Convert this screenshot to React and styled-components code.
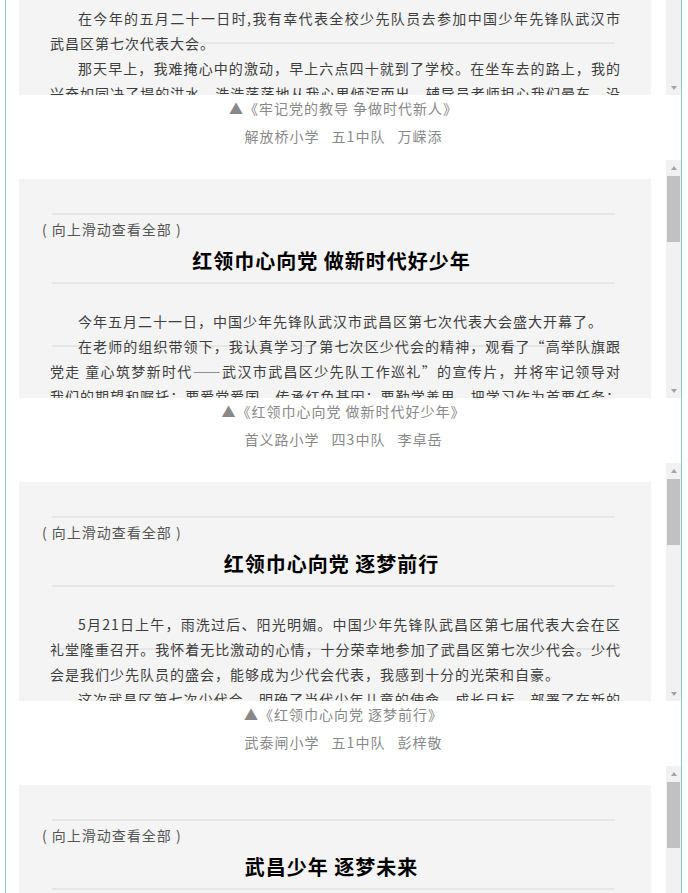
import React from "react";
import styled, { createGlobalStyle } from "styled-components";

const Global = createGlobalStyle`
  html, body { margin: 0; padding: 0; background: #ffffff; }
  body {
    font-family: "Noto Sans CJK SC", "Noto Sans", "Liberation Sans", sans-serif;
    overflow: hidden;
  }
`;

const Page = styled.div`
  box-sizing: border-box;
  width: 677px;
  margin-left: 5px;
  min-height: 1200px;
  border-left: 1px solid #86cfc2;
  border-right: 1px solid #86cfc2;
  background: #fff;
`;

const Feed = styled.div`
  display: flex;
  flex-direction: column;
  margin-top: -143px;
`;

const Section = styled.section`
  display: flex;
  flex-direction: column;
  padding-bottom: 11px;
`;

const Frame = styled.div`
  display: flex;
  height: 238px;
  background: #fff;
`;

const Viewport = styled.div`
  flex: 1;
  min-width: 0;
  box-sizing: border-box;
  overflow-y: auto;
  overflow-x: hidden;
  scrollbar-width: none;
  padding: 19px 15px 0 13px;
  &::-webkit-scrollbar { display: none; }
`;

const Scrollbar = styled.div`
  width: 15px;
  flex: none;
  display: flex;
  flex-direction: column;
  background: #f1f1f1;
`;

const ArrowButton = styled.div`
  height: 15px;
  flex: none;
  display: flex;
  align-items: center;
  justify-content: center;
  &::before {
    content: "";
    width: 0;
    height: 0;
    border-left: 3.5px solid transparent;
    border-right: 3.5px solid transparent;
    ${(p) =>
      p.$dir === "up"
        ? "border-bottom: 4px solid #a3a3a3;"
        : "border-top: 4px solid #a3a3a3;"}
  }
`;

const Track = styled.div`
  flex: 1;
  display: flex;
  flex-direction: column;
  padding: 1px 1px 0;
`;

const Thumb = styled.div`
  height: 66px;
  background: #c1c1c1;
`;

const line = (y) =>
  `linear-gradient(#e6e6e6, #e6e6e6) no-repeat 33px ${y}px / 563px 2px`;

const Panel = styled.div`
  box-sizing: border-box;
  min-height: 731px;
  padding: 40px 30px 30px 23px;
  background: ${line(34)}, ${line(103)}, ${line(166)}, #f4f4f4;
`;

const Hint = styled.div`
  font-size: 14px;
  line-height: 20px;
  letter-spacing: 1px;
  color: #555;
  white-space: pre;
`;

const Title = styled.h2`
  margin: 8px 0 0;
  font-size: 20px;
  line-height: 28px;
  font-weight: bold;
  letter-spacing: 1px;
  color: #000;
  text-align: center;
`;

const Body = styled.div`
  margin-top: 34px;
  padding-left: 8px;
`;

const Para = styled.p`
  margin: 0;
  font-size: 14px;
  line-height: 25px;
  letter-spacing: 1px;
  color: #3e3e3e;
  text-align: justify;
  text-indent: 2em;
`;

const Wide = styled.span`
  font-feature-settings: "fwid" 1;
  font-variant-east-asian: full-width;
`;

const Caption = styled.div`
  font-size: 14px;
  line-height: 26px;
  letter-spacing: 1px;
  color: #888;
  text-align: center;
`;

const Byline = styled.div`
  margin-top: 2px;
  display: flex;
  justify-content: center;
  gap: 12px;
  font-size: 14px;
  line-height: 26px;
  letter-spacing: 1px;
  color: #888;
  min-height: 26px;
`;

const articles = [
  {
    title: "牢记党的教导 争做时代新人",
    byline: ["解放桥小学", "五1中队", "万嵘添"],
    paras: [
      "在今年的五月二十一日时,我有幸代表全校少先队员去参加中国少年先锋队武汉市武昌区第七次代表大会。",
      "那天早上，我难掩心中的激动，早上六点四十就到了学校。在坐车去的路上，我的兴奋如同决了堤的洪水，浩浩荡荡地从我心里倾泻而出。辅导员老师担心我们晕车，没有让我们多说话，我便望着窗外，想象着会场的样子。",
      "到了会场，我看到了来自全区各个学校的少先队员代表，大家都戴着鲜艳的红领巾，脸上洋溢着灿烂的笑容。大会开始了，我们齐唱队歌，聆听了领导的讲话。",
      "这次少代会让我明白了，作为新时代的少先队员，我们要牢记党的教导，好好学习，天天向上，争做新时代的好少年。",
    ],
  },
  {
    title: "红领巾心向党 做新时代好少年",
    byline: ["首义路小学", "四3中队", "李卓岳"],
    paras: [
      "今年五月二十一日，中国少年先锋队武汉市武昌区第七次代表大会盛大开幕了。",
      "在老师的组织带领下，我认真学习了第七次区少代会的精神，观看了“高举队旗跟党走 童心筑梦新时代——武汉市武昌区少先队工作巡礼”的宣传片，并将牢记领导对我们的期望和嘱托：要爱党爱国，传承红色基因；要勤学善思，把学习作为首要任务；要锤炼品德，做一个有道德的人；要强健体魄，积极参加体育锻炼。",
      "作为一名少先队员，我要从现在做起，从点滴做起，红领巾心向党，做新时代的好少年。",
    ],
  },
  {
    title: "红领巾心向党 逐梦前行",
    byline: ["武泰闸小学", "五1中队", "彭梓敬"],
    paras: [
      "5月21日上午，雨洗过后、阳光明媚。中国少年先锋队武昌区第七届代表大会在区礼堂隆重召开。我怀着无比激动的心情，十分荣幸地参加了武昌区第七次少代会。少代会是我们少先队员的盛会，能够成为少代会代表，我感到十分的光荣和自豪。",
      "这次武昌区第七次少代会，明确了当代少年儿童的使命、成长目标，部署了在新的时代里少先队工作的任务。我们要听党话、跟党走，从小学先锋、长大做先锋。",
      "我一定会把这次大会的精神带回学校，和同学们一起分享，红领巾心向党，逐梦前行。",
    ],
  },
  {
    title: "武昌少年 逐梦未来",
    byline: [],
    paras: [
      "五月的江城，处处洋溢着青春的气息。中国少年先锋队武汉市武昌区第七次代表大会隆重召开，我作为少先队员代表参加了这次盛会。",
      "大会上，我们认真聆听了工作报告，深刻感受到了党和国家对少年儿童的关怀。我们要从小树立远大理想，努力学习，做一名合格的少先队员。",
    ],
  },
];

function renderText(text) {
  return text.split(/([“”]|——)/).map((part, i) =>
    /^([“”]|——)$/.test(part) ? <Wide key={i}>{part}</Wide> : part
  );
}

function Article({ title, byline, paras }) {
  return (
    <Section>
      <Frame>
        <Viewport>
          <Panel>
            <Hint>( 向上滑动查看全部 )</Hint>
            <Title>{title}</Title>
            <Body>
              {paras.map((p, i) => (
                <Para key={i}>{renderText(p)}</Para>
              ))}
            </Body>
          </Panel>
        </Viewport>
        <Scrollbar aria-hidden="true">
          <ArrowButton $dir="up" />
          <Track>
            <Thumb />
          </Track>
          <ArrowButton $dir="down" />
        </Scrollbar>
      </Frame>
      <Caption>▲《{title}》</Caption>
      <Byline>
        {byline.map((b, i) => (
          <span key={i}>{b}</span>
        ))}
      </Byline>
    </Section>
  );
}

export default function App() {
  return (
    <>
      <Global />
      <Page>
        <Feed>
          {articles.map((a, i) => (
            <Article key={i} {...a} />
          ))}
        </Feed>
      </Page>
    </>
  );
}
